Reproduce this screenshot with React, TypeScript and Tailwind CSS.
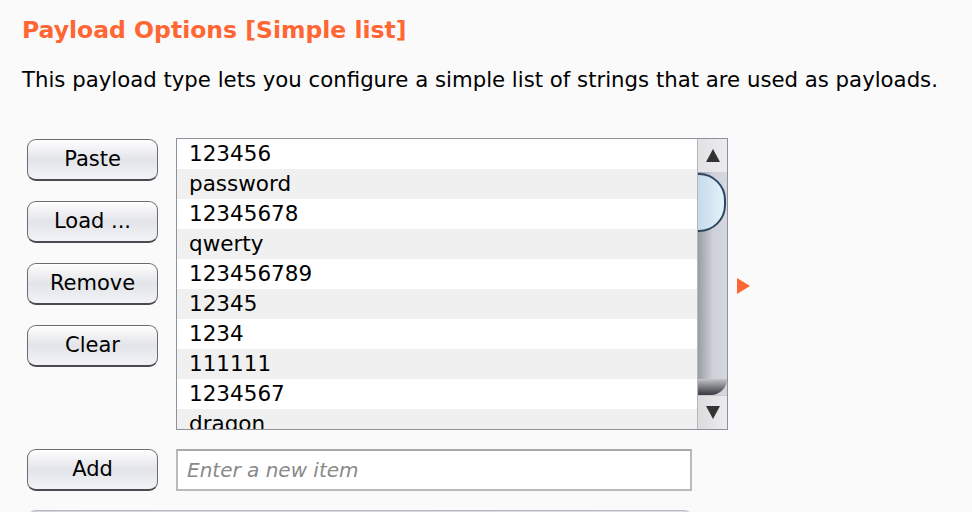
import React from "react";

const items = [
  "123456",
  "password",
  "12345678",
  "qwerty",
  "123456789",
  "12345",
  "1234",
  "111111",
  "1234567",
  "dragon",
];

const font = { fontFamily: '"DejaVu Sans", "Liberation Sans", sans-serif' };

const AquaButton: React.FC<{ label: string }> = ({ label }) => (
  <button className="flex h-[42px] w-[131px] items-center justify-center rounded-[9px] border border-[#6b6b70] border-b-[2px] border-b-[#4a4a50] bg-gradient-to-b from-[#fefefe] via-[#e3e4e9] to-[#f2f3f7] text-[21px] text-black shadow-[inset_0_1px_0_#ffffff]">
    {label}
  </button>
);

const Scrollbar: React.FC = () => (
  <div className="relative flex w-[30px] flex-col overflow-hidden border-l border-[#b5b7bd] bg-gradient-to-r from-[#9a9da3] via-[#cdd0d8] to-[#d5d8e0]">
    <div className="flex h-[33px] items-center justify-center bg-gradient-to-r from-[#e2e2e4] to-[#ececee]">
      <svg width="14" height="13" viewBox="0 0 14 13">
        <polygon points="7,0 14,13 0,13" fill="#333" />
      </svg>
    </div>
    <div className="relative flex-1">
      <div className="absolute left-[-26px] top-[1px] h-[59px] w-[54px] rounded-full border-[2px] border-[#2d4760] bg-gradient-to-r from-[#9fb9cf] via-[#c8dbea] to-[#e4f3fb]" />
      <div className="absolute bottom-0 left-0 h-[16px] w-full rounded-br-[20px] bg-gradient-to-b from-[#c4c6cc] to-[#3a3b40]" />
    </div>
    <div className="flex h-[34px] items-center justify-center border-t border-[#c9cacd] bg-gradient-to-r from-[#dcdcde] to-[#ececee]">
      <svg width="14" height="13" viewBox="0 0 14 13">
        <polygon points="0,0 14,0 7,13" fill="#333" />
      </svg>
    </div>
  </div>
);

export default function App() {
  return (
    <div
      className="h-[512px] w-[972px] overflow-hidden bg-[#fafafa] pl-[22px] pt-[14px] text-black"
      style={font}
    >
      <h1 className="text-[23.5px] font-bold leading-[32px] text-[#ff6633]">
        Payload Options [Simple list]
      </h1>
      <p className="mt-[20px] text-[21.25px] leading-[28px]">
        This payload type lets you configure a simple list of strings that are
        used as payloads.
      </p>

      <div className="mt-[44px] flex items-start">
        <div className="ml-[5px] flex flex-col gap-[20px] pt-[1px]">
          <AquaButton label="Paste" />
          <AquaButton label="Load ..." />
          <AquaButton label="Remove" />
          <AquaButton label="Clear" />
        </div>

        <div className="ml-[18px] flex h-[292px] w-[552px] border border-[#8f909a]">
          <div className="flex-1 overflow-hidden">
            {items.map((item, i) => (
              <div
                key={item}
                className={`h-[30px] pl-[12px] text-[21.5px] leading-[30px] ${
                  i % 2 === 0 ? "bg-white" : "bg-[#f0f0f0]"
                }`}
              >
                {item}
              </div>
            ))}
          </div>
          <Scrollbar />
        </div>

        <div className="ml-[9px] mt-[140px]">
          <svg width="13" height="16" viewBox="0 0 13 16">
            <polygon points="0,0 13,8 0,16" fill="#ff6633" />
          </svg>
        </div>
      </div>

      <div className="mt-[19px] flex items-center">
        <div className="ml-[5px]">
          <AquaButton label="Add" />
        </div>
        <div className="ml-[18px] flex h-[42px] w-[516px] items-center border-[2px] border-[#b9b9b9] border-t-[#a9a9a9] bg-white pl-[9px]">
          <span className="text-[20px] italic text-[#8a8a8a]">
            Enter a new item
          </span>
        </div>
      </div>

      <div className="ml-[6px] mt-[19px] h-[10px] w-[664px] rounded-t-[8px] border-t border-[#b8bac2] bg-gradient-to-r from-[#d3d5dc] to-[#dcdee5]" />
    </div>
  );
}
